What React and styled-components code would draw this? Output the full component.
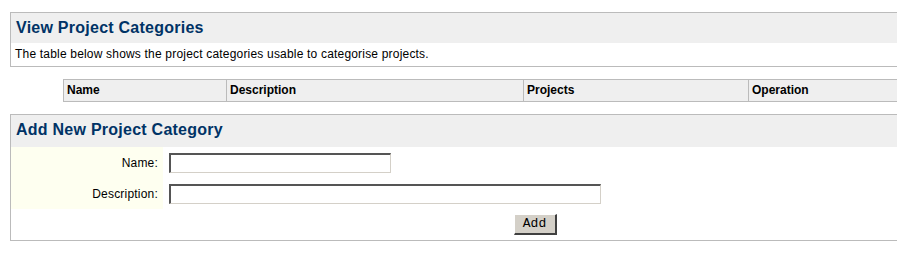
import React from "react";
import styled, { createGlobalStyle } from "styled-components";

const Global = createGlobalStyle`
  html, body { margin: 0; padding: 0; background: #ffffff; overflow: hidden; }
  body { font-family: "Liberation Sans", Arial, sans-serif; font-size: 12px; color: #000; }
`;

const Page = styled.div`
  width: 1060px;
  padding: 12px 0 0 10px;
  box-sizing: border-box;
  display: flex;
  flex-direction: column;
  align-items: flex-start;
`;

const Box = styled.section`
  width: 1050px;
  border: 1px solid #bbbbbb;
  box-sizing: border-box;
  margin-bottom: ${(p) => p.$gap || 0}px;
`;

const Title = styled.h2`
  margin: 0;
  height: ${(p) => p.$h || 30}px;
  line-height: 30px;
  padding: 0 5px;
  background: #efefef;
  color: #003366;
  font-size: 16px;
  font-weight: bold;
  letter-spacing: 0.25px;
  font-family: "Liberation Sans", Arial, sans-serif;
  box-sizing: border-box;
`;

const Intro = styled.p`
  margin: 0;
  height: 23px;
  line-height: 23px;
  padding: 0 4px;
  font-size: 12px;
  letter-spacing: 0.19px;
`;

const Table = styled.div`
  margin-left: 53px;
  margin-bottom: 12px;
  width: 950px;
  border: 1px solid #bbbbbb;
  background: #efefef;
  display: grid;
  grid-template-columns: 162px 297px 225px 1fr;
`;

const HeadCell = styled.div`
  height: 21px;
  line-height: 21px;
  padding: 0 3px;
  box-sizing: border-box;
  font-weight: bold;
  font-size: 12px;
  border-left: ${(p) => (p.$first ? "none" : "1px solid #bbbbbb")};
`;

const Form = styled.div`
  display: grid;
  grid-template-columns: 152px 1fr;
  grid-auto-rows: 31px;
`;

const Label = styled.label`
  background: #fefff0;
  display: flex;
  align-items: center;
  justify-content: flex-end;
  padding-right: 5px;
  font-size: 12px;
  letter-spacing: 0.2px;
`;

const Field = styled.div`
  display: flex;
  align-items: center;
  padding-left: 6px;
`;

const Input = styled.input`
  width: ${(p) => p.$w}px;
  height: 20px;
  box-sizing: border-box;
  margin: 0;
  padding: 0 2px;
  background: #fff;
  border-top: 2px solid #555555;
  border-left: 2px solid #555555;
  border-bottom: 1px solid #d4d0c8;
  border-right: 1px solid #d4d0c8;
  outline: none;
  font-family: "Liberation Sans", Arial, sans-serif;
  font-size: 12px;
`;

const Actions = styled.div`
  grid-column: 1 / -1;
  display: flex;
  align-items: center;
  justify-content: center;
`;

const Button = styled.button`
  width: 43px;
  height: 21px;
  margin: 0;
  padding: 0;
  background: #d4d0c8;
  border-top: 1px solid #ffffff;
  border-left: 1px solid #ffffff;
  border-right: 2px solid #404040;
  border-bottom: 2px solid #404040;
  font-family: "Liberation Mono", "Courier New", monospace;
  font-size: 13px;
  color: #000;
  line-height: 18px;
`;

export default function App() {
  return (
    <>
      <Global />
      <Page>
        <Box $gap={12}>
          <Title>View Project Categories</Title>
          <Intro>The table below shows the project categories usable to categorise projects.</Intro>
        </Box>
        <Table>
          <HeadCell $first>Name</HeadCell>
          <HeadCell>Description</HeadCell>
          <HeadCell>Projects</HeadCell>
          <HeadCell>Operation</HeadCell>
        </Table>
        <Box>
          <Title $h={32}>Add New Project Category</Title>
          <Form>
            <Label htmlFor="cat-name">Name:</Label>
            <Field>
              <Input id="cat-name" $w={222} />
            </Field>
            <Label htmlFor="cat-desc">Description:</Label>
            <Field>
              <Input id="cat-desc" $w={432} />
            </Field>
            <Actions>
              <Button type="button">Add</Button>
            </Actions>
          </Form>
        </Box>
      </Page>
    </>
  );
}
